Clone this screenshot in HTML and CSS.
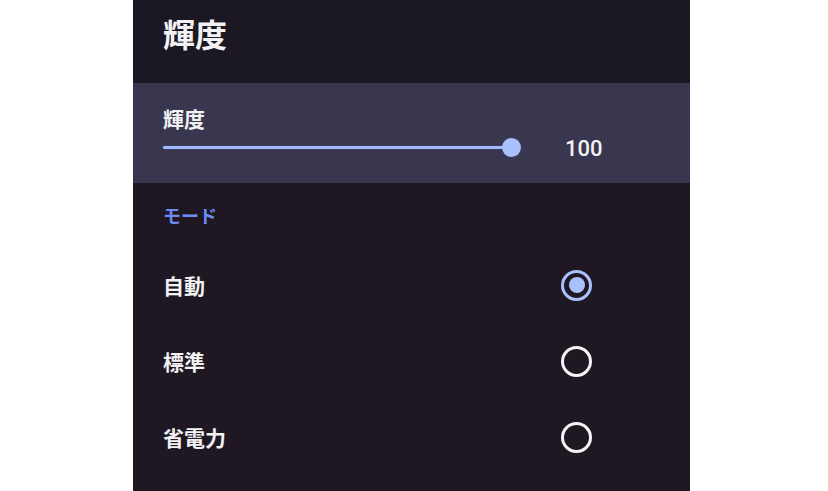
FILE: index.html
```html
<!DOCTYPE html>
<html lang="ja">
<head>
<meta charset="utf-8">
<link rel="stylesheet" href="styles.css">
</head>
<body>
<div class="panel">
  <div class="header"><h1 class="title">輝度</h1></div>
  <div class="slider-row">
    <div class="label">輝度</div>
    <div class="slider">
      <div class="track"><div class="fill"></div><div class="thumb"></div></div>
      <div class="value">100</div>
    </div>
  </div>
  <div class="section">モード</div>
  <div class="option"><span class="label">自動</span><span class="radio checked"></span></div>
  <div class="option"><span class="label">標準</span><span class="radio"></span></div>
  <div class="option"><span class="label">省電力</span><span class="radio"></span></div>
</div>
</body>
</html>
```
FILE: styles.css
```css
html, body { margin: 0; padding: 0; background: #ffffff; }
body { font-family: "Noto Sans CJK JP", "Noto Sans", sans-serif; }
.panel {
  margin-left: 133px;
  width: 557px;
  height: 491px;
  background: #1f1822;
  color: #f2f2f4;
  overflow: hidden;
}
.header {
  height: 83px;
  box-sizing: border-box;
  padding: 16px 30px 0;
  background: #1c1823;
}
.title {
  margin: 0;
  font-size: 32px;
  line-height: 34px;
  font-weight: 700;
}
.slider-row {
  height: 100px;
  box-sizing: border-box;
  padding: 23px 30px 0;
  background: #38374f;
}
.label {
  font-size: 21px;
  line-height: 24px;
  font-weight: 700;
}
.slider {
  display: flex;
  align-items: center;
  height: 20px;
  margin-top: 8px;
}
.track {
  position: relative;
  width: 358px;
  height: 20px;
}
.fill {
  position: absolute;
  left: 0;
  right: 9px;
  top: 8px;
  height: 3px;
  background: #a3b8fb;
  border-radius: 2px;
  box-shadow: 0 0 1px #5570e0;
}
.thumb {
  position: absolute;
  right: 0;
  top: 0;
  width: 19px;
  height: 19px;
  border-radius: 50%;
  background: #a9c0fc;
}
.value {
  margin-left: 44px;
  font-family: Roboto, "Noto Sans", sans-serif;
  font-size: 22px;
  font-weight: 500;
}
.section {
  padding: 22px 30px 0;
  height: 64px;
  box-sizing: border-box;
  font-size: 18px;
  line-height: 20px;
  font-weight: 700;
  color: #6b8cf2;
}
.option {
  display: flex;
  align-items: center;
  justify-content: space-between;
  height: 76px;
  padding: 0 98px 0 30px;
}
.radio {
  width: 31px;
  height: 31px;
  box-sizing: border-box;
  border: 3px solid #f4f4f6;
  border-radius: 50%;
  display: flex;
  align-items: center;
  justify-content: center;
}
.radio.checked { border-color: #a9c0fc; }
.radio.checked::after {
  content: "";
  width: 16px;
  height: 16px;
  border-radius: 50%;
  background: #a9c0fc;
}
```
